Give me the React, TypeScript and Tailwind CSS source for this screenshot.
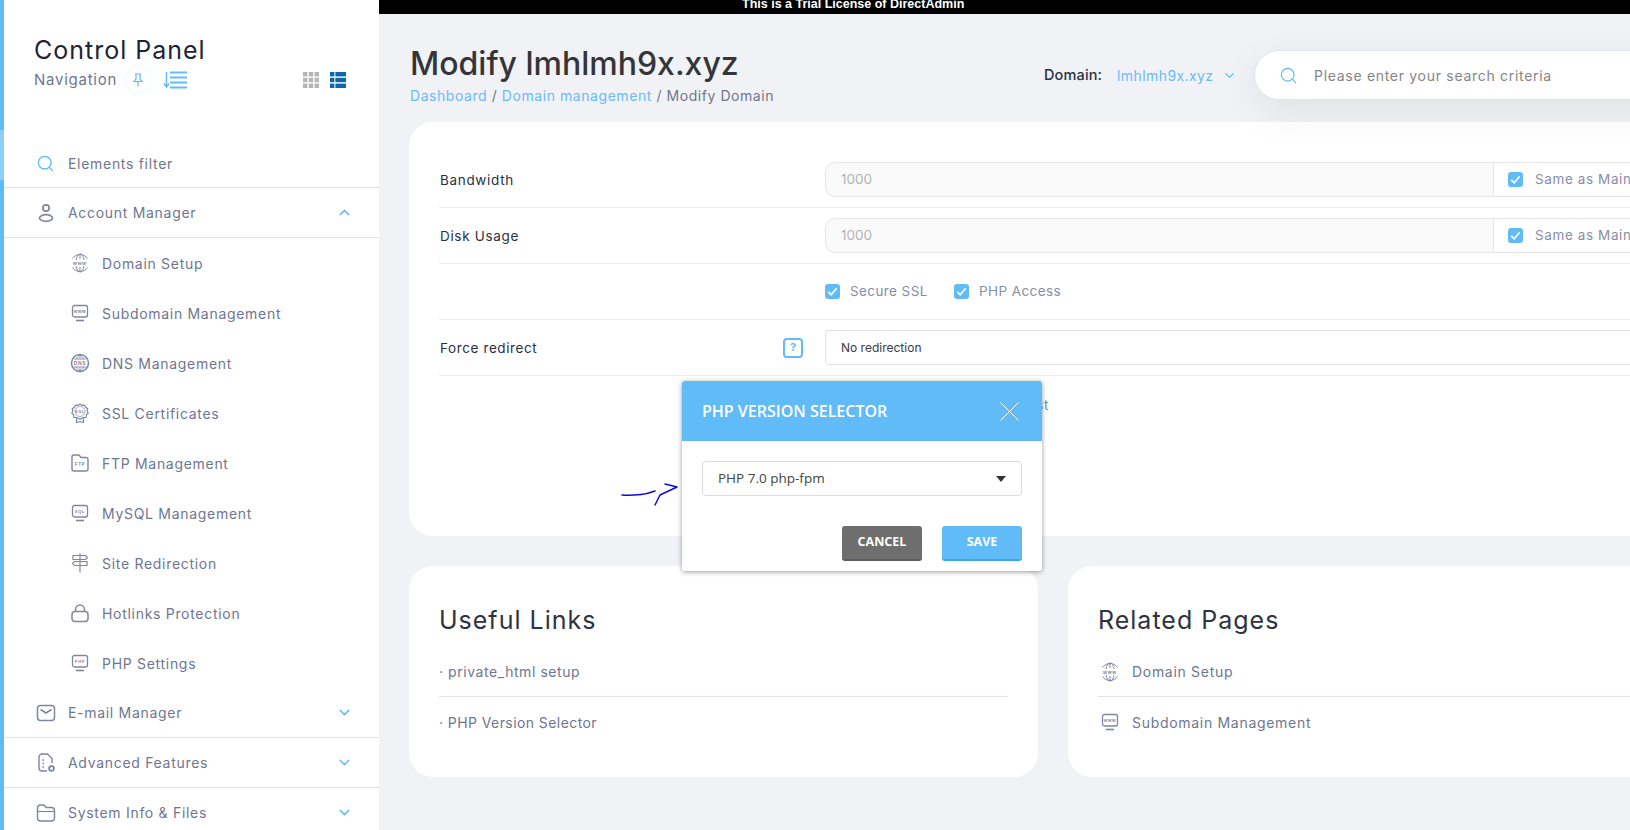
import { ChevronDown, ChevronUp, Search } from "lucide-react";
import type { ReactNode } from "react";

const sans = "font-['Inter','Liberation_Sans',sans-serif]";
const open = "font-['Open_Sans','Liberation_Sans',sans-serif]";
const body = "text-[14px] tracking-[0.05em]";

function Ico({ children, className = "" }: { children: ReactNode; className?: string }) {
  return (
    <svg viewBox="0 0 20 20" fill="none" stroke="#7f879f" strokeWidth="1.3" className={"h-[20px] w-[20px] shrink-0 " + className}>
      {children}
    </svg>
  );
}

function Tiny({ x = 10, y = 11.5, size = 4, children }: { x?: number; y?: number; size?: number; children: string }) {
  return (
    <text x={x} y={y} textAnchor="middle" fontSize={size} fontWeight="700" fill="#7f879f" stroke="none" fontFamily="Liberation Sans">
      {children}
    </text>
  );
}

const WwwIcon = () => (
  <Ico>
    <path d="M2.500 5.500a9 9 0 0 1 15 0M2.500 14.500a9 9 0 0 0 15 0M6 7C6.500 4 8 1.500 10 1s3.500 3 4 6M6 13c.5 3 2 5.500 4 6s3.500-3 4-6M10 1v5M10 14v5" strokeWidth="1" />
    <Tiny size={5}>www</Tiny>
  </Ico>
);
const MonitorIcon = ({ label }: { label: string }) => (
  <Ico>
    <rect x="2.500" y="2.500" width="15" height="11.500" rx="2" />
    <path d="M6 17.500h8" strokeWidth="1.600" />
    <Tiny y={10} size={label === "www" ? 4.500 : 4}>{label}</Tiny>
  </Ico>
);
const DnsIcon = () => (
  <Ico>
    <circle cx="10" cy="10" r="8.500" strokeWidth="1.500" />
    <path d="M4 6h12M4 14h12M10 1.500v4M10 14.500v4M6.500 6C7 4 8 3 10 2.500M13.500 6C13 4 12 3 10 2.500M6.500 14c.5 2 1.500 3 3.500 3.500M13.500 14c-.5 2-1.500 3-3.500 3.500" strokeWidth=".9" />
    <Tiny y={11.800} size={5}>DNS</Tiny>
  </Ico>
);
const SslIcon = () => (
  <Ico>
    <path d="M10 1l2 1.400 2.500-.3 1 2.300 2.200 1.200-.5 2.400 1 2.200-1.800 1.700-.3 2.400-2.500.3L10 16l-3.600-1.400-2.500-.3-.3-2.400-1.800-1.700 1-2.200L2.300 5.600l2.200-1.200 1-2.300 2.500.3z" strokeWidth="1.200" />
    <circle cx="10" cy="8.500" r="5" strokeWidth=".7" />
    <path d="M6.500 15.500v4l3.500-1 3.500 1v-4" strokeWidth="1.200" />
    <Tiny y={10} size={4}>SSL</Tiny>
  </Ico>
);
const FtpIcon = () => (
  <Ico>
    <path d="M2 4a2 2 0 0 1 2-2h5l2 2.500h5a2 2 0 0 1 2 2V16a2 2 0 0 1-2 2H4a2 2 0 0 1-2-2z" strokeWidth="1.400" />
    <Tiny y={12.500} size={4.500}>FTP</Tiny>
  </Ico>
);
const SignIcon = () => (
  <Ico>
    <path d="M10 .5v19M3 2.500h12.500l2 2-2 2H3zM17 8.500H4.500l-2 2 2 2H17z" strokeWidth="1.200" />
  </Ico>
);
const LockIcon = () => (
  <Ico>
    <path d="M5.500 9V6.500a4.500 4.500 0 0 1 9 0V9" strokeWidth="1.500" />
    <rect x="2" y="8.500" width="16" height="10" rx="3" strokeWidth="1.500" />
  </Ico>
);
const UserIcon = () => (
  <Ico>
    <circle cx="10" cy="5" r="3.200" strokeWidth="1.700" />
    <ellipse cx="10" cy="15" rx="6.500" ry="3.300" strokeWidth="1.700" />
  </Ico>
);
const MailIcon = () => (
  <Ico>
    <rect x="1.500" y="2.500" width="17" height="15" rx="3" strokeWidth="1.500" />
    <path d="M4.500 6.500l5.500 3.500 5.500-3.500" strokeWidth="1.500" />
  </Ico>
);
const DocGearIcon = () => (
  <Ico>
    <path d="M11 18H6a3 3 0 0 1-3-3V4a3 3 0 0 1 3-3h5.500L16 5.500V10" strokeWidth="1.400" />
    <path d="M6.500 7h1.500M6.500 10.500h1.500M6.500 14h1.500" strokeWidth="1.400" />
    <circle cx="15.500" cy="15.500" r="2.400" strokeWidth="1.800" />
  </Ico>
);
const FolderIcon = () => (
  <Ico>
    <path d="M1.500 5a3 3 0 0 1 3-3h3.500l2 2.500h5.500a3 3 0 0 1 3 3V15a3 3 0 0 1-3 3h-11a3 3 0 0 1-3-3z" strokeWidth="1.400" />
    <path d="M2 8.500h16" strokeWidth="1.200" />
  </Ico>
);

function Check() {
  return (
    <span className="flex h-[15px] w-[15px] shrink-0 items-center justify-center rounded-[3px] bg-[#60bbf7]">
      <svg viewBox="0 0 14 14" className="h-[13px] w-[13px]" fill="none" stroke="#fff" strokeWidth="1.800">
        <path d="M2.500 7.500l3 3 6-7" />
      </svg>
    </span>
  );
}

const subItems: [ReactNode, string][] = [
  [<WwwIcon />, "Domain Setup"],
  [<MonitorIcon label="www" />, "Subdomain Management"],
  [<DnsIcon />, "DNS Management"],
  [<SslIcon />, "SSL Certificates"],
  [<FtpIcon />, "FTP Management"],
  [<MonitorIcon label="SQL" />, "MySQL Management"],
  [<SignIcon />, "Site Redirection"],
  [<LockIcon />, "Hotlinks Protection"],
  [<MonitorIcon label="PHP" />, "PHP Settings"],
];

function Sidebar() {
  return (
    <aside className="flex h-full w-[379px] shrink-0 bg-white">
      <div className="w-1 shrink-0 bg-[#60bbf7] pt-[130px]">
        <div className="h-[50px] bg-[#8ccff9]" />
      </div>
      <div className="min-w-0 flex-1">
        <div className="h-[139px] pl-[30px] pt-[34px]">
          <h2 className="text-[25px] leading-[32px] tracking-[0.04em] text-[#1f2433]">Control Panel</h2>
          <div className="mt-px flex h-[26px] items-center">
            <span className="w-[92px] text-[15px] tracking-[0.05em] text-[#6f7690]">Navigation</span>
            <span className="flex h-6 w-6 items-center justify-center rounded-full shadow-[0_0_6px_rgba(96,187,247,0.14)]">
              <svg viewBox="0 0 12 14" className="h-[14px] w-[12px]" fill="none" stroke="#60bbf7" strokeWidth="1.200">
                <path d="M3 1h6M4 1v5L2 8.500h8L8 6V1M6 8.500V13.500" />
              </svg>
            </span>
            <svg viewBox="0 0 24 18" className="ml-[13px] h-[18px] w-6" fill="none" stroke="#60bbf7">
              <path d="M3.500 1v14M1 12.500l2.500 3.500 2.500-3.500" strokeWidth="1.400" />
              <path d="M7 1.500h17M7 6.500h17M7 11.500h17M7 16.500h17" strokeWidth="2" />
            </svg>
            <svg viewBox="0 0 16 16" className="ml-[116px] h-4 w-4" fill="#b5b5b5">
              <rect width="4.400" height="4.400" /><rect x="5.800" width="4.400" height="4.400" /><rect x="11.600" width="4.400" height="4.400" />
              <rect y="5.800" width="4.400" height="4.400" /><rect x="5.800" y="5.800" width="4.400" height="4.400" /><rect x="11.600" y="5.800" width="4.400" height="4.400" />
              <rect y="11.600" width="4.400" height="4.400" /><rect x="5.800" y="11.600" width="4.400" height="4.400" /><rect x="11.600" y="11.600" width="4.400" height="4.400" />
            </svg>
            <svg viewBox="0 0 16 16" className="ml-[11px] h-4 w-4" fill="#0a69a6">
              <rect width="4.400" height="4.400" /><rect x="5.400" width="10.600" height="4.400" />
              <rect y="5.800" width="4.400" height="4.400" /><rect x="5.400" y="5.800" width="10.600" height="4.400" />
              <rect y="11.600" width="4.400" height="4.400" /><rect x="5.400" y="11.600" width="10.600" height="4.400" />
            </svg>
          </div>
        </div>
        <nav className={body + " text-[#6f7690]"}>
          <div className="flex h-[49px] items-center border-b border-[#e0e3ec] pl-[32px]">
            <Search className="mr-[13px] h-[19px] w-[19px] shrink-0" stroke="#60bbf7" strokeWidth={1.700} />
            <span>Elements filter</span>
          </div>
          <MainRow icon={<UserIcon />} label="Account Manager" up />
          {subItems.map(([icon, label]) => (
            <div key={label} className="flex h-[50px] items-center pl-[66px]">
              <span className="mr-[12px]">{icon}</span>
              <span>{label}</span>
            </div>
          ))}
          <MainRow icon={<MailIcon />} label="E-mail Manager" />
          <MainRow icon={<DocGearIcon />} label="Advanced Features" />
          <MainRow icon={<FolderIcon />} label="System Info & Files" />
        </nav>
      </div>
    </aside>
  );
}

function MainRow({ icon, label, up = false }: { icon: ReactNode; label: string; up?: boolean }) {
  return (
    <div className="flex h-[50px] items-center border-b border-[#e0e3ec] pl-[32px] pr-[26px]">
      <span className="mr-[12px]">{icon}</span>
      <span className="flex-1">{label}</span>
      {up ? (
        <ChevronUp className="h-[17px] w-[17px]" stroke="#60bbf7" strokeWidth={2} />
      ) : (
        <ChevronDown className="h-[17px] w-[17px]" stroke="#60bbf7" strokeWidth={2} />
      )}
    </div>
  );
}

function LimitRow({ label }: { label: string }) {
  return (
    <div className="flex h-[56px] items-center border-b border-[#ececec]">
      <span className="w-[386px] shrink-0 pl-px pt-[2px] text-[13.500px] tracking-[0.05em] text-[#2b3040]">{label}</span>
      <div className="flex h-[35px] flex-1">
        <div className="flex w-[668px] items-center rounded-l-[10px] border border-r-0 border-[#e6e6e6] bg-[#fafafa] pl-[15px] text-[13.500px] text-[#b3b3b3]">1000</div>
        <div className="flex flex-1 items-center gap-[12px] border border-[#e6e6e6] pl-[14px] text-[13.500px] tracking-[0.045em] text-[#888ea3]">
          <Check />
          <span>Same as Main</span>
        </div>
      </div>
    </div>
  );
}

function Modal() {
  return (
    <div className={"absolute left-[303px] top-[381px] w-[360px] overflow-hidden rounded-[3px] bg-white shadow-[0_1px_5px_rgba(0,0,0,0.4)] " + open}>
      <div className="flex h-[60px] items-center justify-between bg-[#60bbf7] pl-[20px] pr-[23px] text-white">
        <span className="text-[16px] font-semibold">PHP VERSION SELECTOR</span>
        <svg viewBox="0 0 19 19" className="h-[19px] w-[19px]" fill="none" stroke="#fff" strokeWidth="1">
          <path d="M.5.5l18 18M18.500.5l-18 18" />
        </svg>
      </div>
      <div className="px-[20px] pt-[20px]">
        <div className="flex h-[35px] items-center justify-between rounded-[4px] border border-[#dcdcdc] pl-[15px] pr-[15px] text-[13.500px] text-[#444]">
          <span>PHP 7.0 php-fpm</span>
          <span className="h-0 w-0 border-x-[5px] border-t-[6px] border-x-transparent border-t-[#333]" />
        </div>
        <div className="mt-[30px] flex justify-end gap-[20px] pb-[10px] text-[12.500px] font-bold text-white">
          <button className="h-[35px] w-[80px] rounded-[3px] border-b-2 border-[#5c5c5c] bg-[#6e6e6e]">CANCEL</button>
          <button className="h-[35px] w-[80px] rounded-[3px] border-b-2 border-[#3aa9f3] bg-[#60bbf7]">SAVE</button>
        </div>
      </div>
    </div>
  );
}

export default function App() {
  return (
    <div className={"flex h-[830px] w-[1630px] overflow-hidden bg-[#f1f2f6] " + sans}>
      <Sidebar />
      <main className="relative min-w-0 flex-1 overflow-hidden">
        <div className="h-[14px] overflow-hidden bg-black pl-[363px] text-[12.500px] font-bold leading-[8px] text-white font-['Liberation_Sans',sans-serif]">
          This is a Trial License of DirectAdmin
        </div>
        <header className="flex h-[108px] items-start pl-[31px]">
          <div className="w-[609px] shrink-0 pt-[32px]">
            <h1 className="text-[32px] font-medium leading-[36px] text-[#343539]">Modify lmhlmh9x.xyz</h1>
            <p className="mt-[3px] text-[14px] tracking-[0.04em] text-[#71768a]">
              <span className="text-[#6cb9f8]">Dashboard</span> / <span className="text-[#6cb9f8]">Domain management</span> / Modify Domain
            </p>
          </div>
          <div className="mt-[36px] flex h-[50px] w-[235px] shrink-0 items-center pl-[25px] text-[14px]">
            <span className="w-[73px] text-[14.500px] font-medium tracking-[0.01em] text-[#2b3040]">Domain:</span>
            <span className="tracking-[0.03em] text-[#6cb9f8]">lmhlmh9x.xyz</span>
            <ChevronDown className="ml-[8px] h-[15px] w-[15px]" stroke="#60bbf7" strokeWidth={2} />
          </div>
          <div className={"mt-[36px] flex h-[50px] w-[600px] shrink-0 items-center rounded-l-[25px] border border-[#e0e5ee] bg-white pl-[24px] text-[#858585] shadow-[0_12px_40px_rgba(0,0,0,0.07)] " + body}>
            <Search className="mr-[16px] h-[19px] w-[19px]" stroke="#60bbf7" strokeWidth={1.500} />
            <span>Please enter your search criteria</span>
          </div>
        </header>

        <section className="ml-[30px] h-[414px] w-[1289px] rounded-[24px] bg-white pl-[30px] pt-[30px]">
          <LimitRow label="Bandwidth" />
          <LimitRow label="Disk Usage" />
          <div className="flex h-[56px] items-center border-b border-[#ececec] pl-[386px] text-[13.500px] tracking-[0.03em] text-[#888ea3]">
            <Check />
            <span className="ml-[10px] w-[95px]">Secure SSL</span>
            <span className="ml-[9px]"><Check /></span>
            <span className="ml-[10px]">PHP Access</span>
          </div>
          <div className="flex h-[56px] items-center border-b border-[#ececec]">
            <span className="w-[344px] shrink-0 pl-px pt-[2px] text-[13.500px] tracking-[0.045em] text-[#2b3040]">Force redirect</span>
            <span className="flex h-[20px] w-[20px] shrink-0 items-center justify-center rounded-[4px] border-2 border-[#60bbf7] text-[11px] font-bold text-[#60bbf7]">?</span>
            <span className="w-[22px] shrink-0" />
            <div className="flex h-[35px] flex-1 items-center rounded-l-[4px] border border-[#e0e0e0] pl-[15px] text-[12px] text-[#3a3a4a]">No redirection</div>
          </div>
          <div className="w-[610px] pt-[19px] text-right text-[13.500px] tracking-[0.045em] text-[#6d93b5]">Request</div>
        </section>

        <div className="ml-[30px] mt-[30px] flex w-[1289px] gap-[30px]">
          <section className="h-[211px] w-[629px] rounded-[24px] bg-white px-[30px] pt-[39px]">
            <h3 className="text-[25px] leading-[30px] tracking-[0.04em] text-[#2f3340]">Useful Links</h3>
            <div className="mt-[12px] flex h-[50px] items-center border-b border-[#e0e3ec] text-[14px] tracking-[0.04em] text-[#6f7690]">· private_html setup</div>
            <div className="flex h-[50px] items-center text-[14px] tracking-[0.03em] text-[#6f7690]">· PHP Version Selector</div>
          </section>
          <section className="h-[211px] flex-1 rounded-[24px] bg-white px-[30px] pt-[39px]">
            <h3 className="text-[25px] leading-[30px] tracking-[0.04em] text-[#2f3340]">Related Pages</h3>
            <div className={"mt-[12px] flex h-[50px] items-center gap-[12px] border-b border-[#e0e3ec] pl-[2px] text-[#6f7690] " + body}><WwwIcon />Domain Setup</div>
            <div className={"flex h-[50px] items-center gap-[12px] pl-[2px] text-[#6f7690] " + body}><MonitorIcon label="www" />Subdomain Management</div>
          </section>
        </div>

        <svg viewBox="0 0 60 24" className="pointer-events-none absolute left-[242px] top-[483px] h-[24px] w-[60px]" fill="none" stroke="#0a0ae0" strokeWidth="1.500" strokeLinecap="round" strokeLinejoin="round">
          <path d="M1 12c7 .5 14 0 19-.5s10-2 14-3.500" />
          <path d="M44 1l12 3-17 8-5 10" />
        </svg>
        <Modal />
      </main>
    </div>
  );
}
